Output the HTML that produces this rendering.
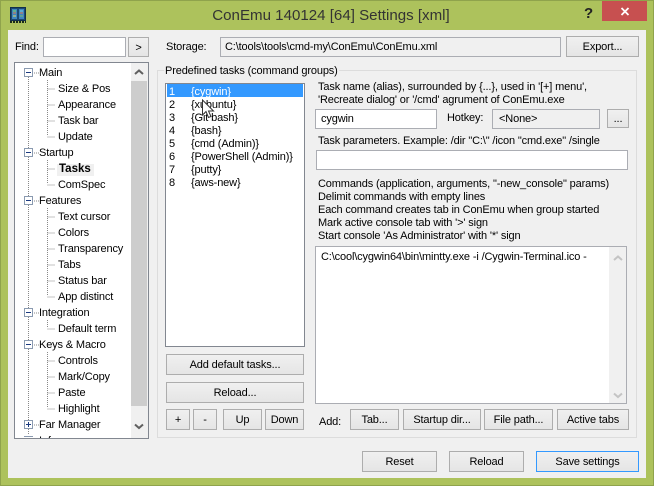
<!DOCTYPE html>
<html><head><meta charset="utf-8"><style>
html,body{margin:0;padding:0;width:654px;height:486px;overflow:hidden}
body{position:relative;background:#adc25c;font:11px/16px "Liberation Sans",sans-serif;letter-spacing:-.14px;color:#000}
#win{position:absolute;left:0;top:0;width:652px;height:484px;border:1px solid #8fa34c}
#cl{position:absolute;left:8px;top:30px;width:638px;height:448px;background:#f0f0f0}
.a,.b,.i,.t{position:absolute;box-sizing:border-box}
.t{white-space:nowrap}
.b{background:linear-gradient(#f0f0f0,#e5e5e5);border:1px solid #adadad;text-align:center;line-height:21px;white-space:nowrap}
.i{background:#fff;border:1px solid #abadb3;white-space:nowrap}
.r{position:absolute;white-space:nowrap;height:16px}
</style></head><body>
<div id="win"></div>
<div id="cl"></div>
<svg class="a" style="left:10px;top:7px" width="16" height="16" viewBox="0 0 16 16"><rect x="0.500" y="0.500" width="15" height="13" fill="#1c4a72" stroke="#12304c"/><rect x="2" y="2" width="5" height="10" fill="#3f86c0"/><rect x="9" y="2" width="5" height="10" fill="#3f86c0"/><path d="M3 4h3" stroke="#7fe060"/><path d="M3 6h3M10 6h3" stroke="#e07a50"/><path d="M3 9h3" stroke="#e8e060"/><path d="M10 4h3" stroke="#70d0e0"/><path d="M10 9h3" stroke="#7fc060"/><path d="M0 15h16" stroke="#1a2a1a" stroke-dasharray="2 1" stroke-width="2"/></svg>
<div class="t" style="left:4px;width:654px;top:7px;text-align:center;font-size:15.1px;letter-spacing:0;line-height:18px;color:#333">ConEmu 140124 [64] Settings [xml]</div>
<div class="t" style="left:584px;top:6px;font-size:15px;letter-spacing:0;font-weight:bold;line-height:16px;color:#222">?</div>
<div class="a" style="left:602px;top:1px;width:45px;height:20px;background:#c75050"></div>
<svg class="a" style="left:620px;top:7px" width="10" height="9"><path d="M1.500 1l7 7M8.500 1l-7 7" stroke="#fff" stroke-width="1.800"/></svg>

<div class="t" style="left:15px;top:39px">Find:</div>
<div class="i" style="left:43px;top:37px;width:83px;height:20px"></div>
<div class="b" style="left:128px;top:37px;width:21px;height:20px;line-height:20px">&gt;</div>
<div class="t" style="left:166px;top:39px">Storage:</div>
<div class="i" style="left:220px;top:37px;width:341px;height:20px;background:#f0f0f0;padding:1px 4px">C:\tools\tools\cmd-my\ConEmu\ConEmu.xml</div>
<div class="b" style="left:566px;top:36px;width:73px;height:21px">Export...</div>

<div class="i" style="left:14px;top:62px;width:135px;height:377px;border-color:#828790;overflow:hidden">
<svg class="a" style="left:0;top:0" width="116" height="375" fill="none">
<g stroke="#888" stroke-dasharray="1 1">
<path d="M13.500 14V372M19 10h5M19 90h5M19 138h5M19 250h5M19 282h5M19 362h5"/>
<path d="M32.500 17V73M32.500 26h8M32.500 42h8M32.500 58h8M32.500 74h8"/>
<path d="M32.500 97V121M32.500 106h8M32.500 122h8"/>
<path d="M32.500 145V233M32.500 154h8M32.500 170h8M32.500 186h8M32.500 202h8M32.500 218h8M32.500 234h8"/>
<path d="M32.500 257V265M32.500 266h8"/>
<path d="M32.500 289V345M32.500 298h8M32.500 314h8M32.500 330h8M32.500 346h8"/>
</g>
<g fill="#fff" stroke="#8a9ab0">
<rect x="9.500" y="5.500" width="8" height="8"/><rect x="9.500" y="85.500" width="8" height="8"/><rect x="9.500" y="133.500" width="8" height="8"/><rect x="9.500" y="245.500" width="8" height="8"/><rect x="9.500" y="277.500" width="8" height="8"/><rect x="9.500" y="357.500" width="8" height="8"/>
</g>
<path d="M11 9.500h5M11 89.500h5M11 137.500h5M11 249.500h5M11 281.500h5M11 361.500h5M13.500 359v5" stroke="#1a3a80"/>
<path d="M9 373.500h9" stroke="#8a9ab0"/>
</svg>
<div class="a" style="left:42px;top:101px;width:37px;height:12px;background:#f0f0f0"></div>
<div class="r" style="left:24px;top:2px">Main</div>
<div class="r" style="left:43px;top:18px">Size &amp; Pos</div>
<div class="r" style="left:43px;top:34px">Appearance</div>
<div class="r" style="left:43px;top:50px">Task bar</div>
<div class="r" style="left:43px;top:66px">Update</div>
<div class="r" style="left:24px;top:82px">Startup</div>
<div class="r" style="left:44px;top:98px;font-weight:bold;font-size:11.500px;letter-spacing:0">Tasks</div>
<div class="r" style="left:43px;top:114px">ComSpec</div>
<div class="r" style="left:24px;top:130px">Features</div>
<div class="r" style="left:43px;top:146px">Text cursor</div>
<div class="r" style="left:43px;top:162px">Colors</div>
<div class="r" style="left:43px;top:178px">Transparency</div>
<div class="r" style="left:43px;top:194px">Tabs</div>
<div class="r" style="left:43px;top:210px">Status bar</div>
<div class="r" style="left:43px;top:226px">App distinct</div>
<div class="r" style="left:24px;top:242px">Integration</div>
<div class="r" style="left:43px;top:258px">Default term</div>
<div class="r" style="left:24px;top:274px">Keys &amp; Macro</div>
<div class="r" style="left:43px;top:290px">Controls</div>
<div class="r" style="left:43px;top:306px">Mark/Copy</div>
<div class="r" style="left:43px;top:322px">Paste</div>
<div class="r" style="left:43px;top:338px">Highlight</div>
<div class="r" style="left:24px;top:354px">Far Manager</div>
<div class="r" style="left:24px;top:370px">Info</div>
<div class="a" style="left:116px;top:0;width:17px;height:375px;background:#f0f0f0"></div>
<div class="a" style="left:116px;top:18px;width:16px;height:325px;background:#cdcdcd"></div>
<svg class="a" style="left:119px;top:6px" width="10" height="7"><path d="M1 5l4-3.500 4 3.500" fill="none" stroke="#606060" stroke-width="2"/></svg>
<svg class="a" style="left:119px;top:360px" width="10" height="7"><path d="M1 1.500l4 3.500 4-3.500" fill="none" stroke="#606060" stroke-width="2"/></svg>
</div>

<div class="a" style="left:157px;top:70px;width:480px;height:368px;border:1px solid #dcdcdc"></div>
<div class="t" style="left:164px;top:63px;background:#f0f0f0;padding:0 1px">Predefined tasks (command groups)</div>

<div class="i" style="left:165px;top:83px;width:140px;height:264px;border-color:#828790;overflow:hidden">
<div class="a" style="left:1px;top:0;width:136px;height:13px;background:#3399ff"></div>
<div class="r" style="left:3px;top:0;color:#fff">1</div><div class="r" style="left:25px;top:0;color:#fff">{cygwin}</div>
<div class="r" style="left:3px;top:13px">2</div><div class="r" style="left:25px;top:13px">{xubuntu}</div>
<div class="r" style="left:3px;top:26px">3</div><div class="r" style="left:25px;top:26px">{Git bash}</div>
<div class="r" style="left:3px;top:39px">4</div><div class="r" style="left:25px;top:39px">{bash}</div>
<div class="r" style="left:3px;top:52px">5</div><div class="r" style="left:25px;top:52px">{cmd (Admin)}</div>
<div class="r" style="left:3px;top:65px">6</div><div class="r" style="left:25px;top:65px">{PowerShell (Admin)}</div>
<div class="r" style="left:3px;top:78px">7</div><div class="r" style="left:25px;top:78px">{putty}</div>
<div class="r" style="left:3px;top:91px">8</div><div class="r" style="left:25px;top:91px">{aws-new}</div>
</div>
<svg class="a" style="left:201px;top:99px" width="14" height="21"><path d="M1.500 1v15l3.500-3.500 2.500 6 2.500-1-2.500-5.500h5z" fill="#fff" stroke="#333"/></svg>

<div class="b" style="left:166px;top:354px;width:138px;height:21px">Add default tasks...</div>
<div class="b" style="left:166px;top:382px;width:138px;height:21px">Reload...</div>
<div class="b" style="left:166px;top:409px;width:24px;height:21px">+</div>
<div class="b" style="left:193px;top:409px;width:24px;height:21px">-</div>
<div class="b" style="left:223px;top:409px;width:39px;height:21px">Up</div>
<div class="b" style="left:265px;top:409px;width:39px;height:21px">Down</div>

<div class="t" style="left:318px;top:79px">Task name (alias), surrounded by {...}, used in '[+] menu',</div>
<div class="t" style="left:318px;top:92px">'Recreate dialog' or '/cmd' agrument of ConEmu.exe</div>
<div class="i" style="left:315px;top:109px;width:122px;height:20px;padding:1px 5px">cygwin</div>
<div class="t" style="left:447px;top:110px">Hotkey:</div>
<div class="i" style="left:492px;top:109px;width:108px;height:20px;background:#f0f0f0;padding:1px 6px">&lt;None&gt;</div>
<div class="b" style="left:607px;top:109px;width:22px;height:19px;line-height:18px">...</div>
<div class="t" style="left:318px;top:133px">Task parameters. Example: /dir "C:\" /icon "cmd.exe" /single</div>
<div class="i" style="left:316px;top:150px;width:312px;height:20px"></div>
<div class="t" style="left:318px;top:176px">Commands (application, arguments, "-new_console" params)</div>
<div class="t" style="left:318px;top:189px">Delimit commands with empty lines</div>
<div class="t" style="left:318px;top:202px">Each command creates tab in ConEmu when group started</div>
<div class="t" style="left:318px;top:215px">Mark active console tab with '&gt;' sign</div>
<div class="t" style="left:318px;top:228px">Start console 'As Administrator' with '*' sign</div>
<div class="i" style="left:315px;top:246px;width:312px;height:158px;overflow:hidden">
<div class="r" style="left:5px;top:2px">C:\cool\cygwin64\bin\mintty.exe -i /Cygwin-Terminal.ico -</div>
<div class="a" style="left:293px;top:0;width:17px;height:156px;background:#f0f0f0"></div>
<svg class="a" style="left:297px;top:8px" width="10" height="7"><path d="M1 5l4-3.500 4 3.500" fill="none" stroke="#c4c4c4" stroke-width="2"/></svg>
<svg class="a" style="left:297px;top:145px" width="10" height="7"><path d="M1 1.500l4 3.500 4-3.500" fill="none" stroke="#c4c4c4" stroke-width="2"/></svg>
</div>
<div class="t" style="left:319px;top:414px">Add:</div>
<div class="b" style="left:350px;top:409px;width:49px;height:21px">Tab...</div>
<div class="b" style="left:403px;top:409px;width:78px;height:21px">Startup dir...</div>
<div class="b" style="left:484px;top:409px;width:69px;height:21px">File path...</div>
<div class="b" style="left:557px;top:409px;width:72px;height:21px">Active tabs</div>

<div class="b" style="left:362px;top:451px;width:75px;height:21px">Reset</div>
<div class="b" style="left:449px;top:451px;width:75px;height:21px">Reload</div>
<div class="b" style="left:536px;top:451px;width:103px;height:21px;border-color:#3399ff">Save settings</div>
</body></html>
